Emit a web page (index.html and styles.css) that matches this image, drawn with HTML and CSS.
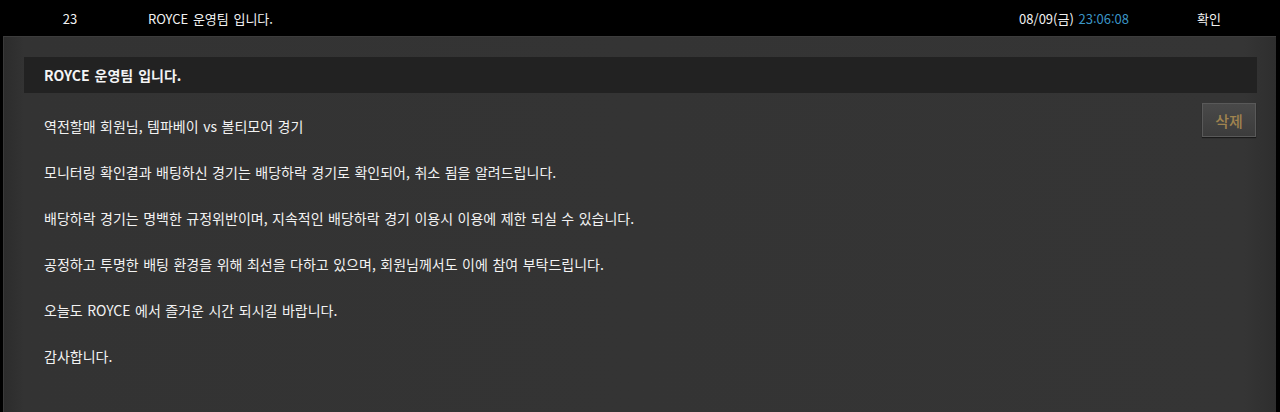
FILE: index.html
```html
<!DOCTYPE html>
<html lang="ko">
<head>
<meta charset="utf-8">
<title>ROYCE</title>
<link rel="stylesheet" href="styles.css">
</head>
<body>
<div class="row">
  <div class="cell-num">23</div>
  <div class="cell-title">ROYCE 운영팀 입니다.</div>
  <div class="cell-date">08/09(금) <span class="time">23:06:08</span></div>
  <div class="cell-status">확인</div>
</div>
<div class="panel">
  <div class="title-bar">ROYCE 운영팀 입니다.</div>
  <div class="content">
    <div class="message">
      <p>역전할매 회원님, 템파베이 vs 볼티모어 경기</p>
      <p>모니터링 확인결과 배팅하신 경기는 배당하락 경기로 확인되어, 취소 됨을 알려드립니다.</p>
      <p>배당하락 경기는 명백한 규정위반이며, 지속적인 배당하락 경기 이용시 이용에 제한 되실 수 있습니다.</p>
      <p>공정하고 투명한 배팅 환경을 위해 최선을 다하고 있으며, 회원님께서도 이에 참여 부탁드립니다.</p>
      <p>오늘도 ROYCE 에서 즐거운 시간 되시길 바랍니다.</p>
      <p>감사합니다.</p>
    </div>
    <button class="btn-delete" type="button">삭제</button>
  </div>
</div>
</body>
</html>
```
FILE: styles.css
```css
html, body {
  margin: 0;
  padding: 0;
  background: #000;
  height: 100%;
}
body {
  font-family: "Noto Sans CJK KR", "Noto Sans", sans-serif;
  color: #fff;
  overflow: hidden;
}
.row {
  display: flex;
  align-items: center;
  height: 36px;
  font-size: 13px;
  color: #f2f2f2;
  word-spacing: 1px;
}
.cell-num {
  width: 140px;
  text-align: center;
}
.cell-title {
  padding-left: 8px;
  flex: 1;
}
.cell-date {
  text-align: right;
  padding-right: 9px;
}
.time {
  color: #3b95c6;
}
.cell-status {
  width: 142px;
  text-align: center;
}
.panel {
  margin: 0 4px 0 3px;
  height: 376px;
  box-sizing: border-box;
  background: linear-gradient(to right, #2c2c2c 0, #333 20px, #353535 1240px, #2e2e2e 100%);
  border-top: 1px solid #3c3c3c;
  border-left: 1px solid #3a3a3a;
  padding: 20px 19px 0 20px;
}
.title-bar {
  height: 36px;
  background: #222;
  display: flex;
  align-items: center;
  padding-left: 20px;
  font-size: 14px;
  font-weight: bold;
  color: #f4f4f4;
  word-spacing: 1px;
}
.content {
  display: flex;
  align-items: flex-start;
  padding-top: 10px;
}
.message {
  flex: 1;
  padding-left: 20px;
}
.message p {
  margin: 0;
  line-height: 46px;
  font-size: 14px;
  color: #f2f2f2;
  word-spacing: 0.6px;
}
.btn-delete {
  width: 54px;
  height: 34px;
  margin-right: 1px;
  border: 1px solid #595959;
  background: linear-gradient(to bottom, #494949, #3c3c3c);
  color: #a0844f;
  font-family: "Noto Sans CJK KR", sans-serif;
  font-size: 15px;
  font-weight: 500;
  padding: 0;
  box-shadow: 0 1px 1px rgba(0,0,0,0.5);
}
```
